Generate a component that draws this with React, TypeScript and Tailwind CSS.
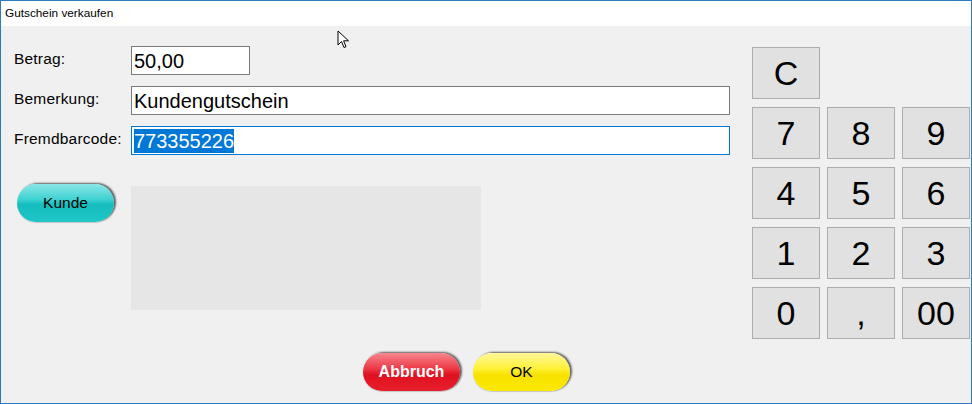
const font = { fontFamily: '"Liberation Sans", Arial, sans-serif' };

type PillProps = {
  label: string;
  tone: "cyan" | "red" | "yellow";
};

const pillClassByTone: Record<PillProps["tone"], string> = {
  cyan: "bg-[linear-gradient(to_bottom,#8be6e6_0%,#3fd2d2_40%,#15bdbe_55%,#1ec6c6_100%)] text-black text-[15.5px]",
  red: "bg-[linear-gradient(to_bottom,#f6868e_0%,#ee3b49_40%,#e0101f_58%,#e8202e_100%)] text-white text-[16px] font-bold",
  yellow: "bg-[linear-gradient(to_bottom,#fff79a_0%,#fff23a_40%,#f7e200_58%,#fde900_100%)] text-black text-[15.5px]",
};

function Pill({ label, tone }: PillProps) {
  return (
    <button
      type="button"
      className={`flex h-[38px] w-[97px] items-center justify-center rounded-full shadow-[2px_-1px_2px_rgba(0,0,0,0.6),0_1px_1px_rgba(0,0,0,0.15)] ${pillClassByTone[tone]}`}
    >
      {label}
    </button>
  );
}

function Field({
  label,
  width,
  children,
  focused,
}: {
  label: string;
  width: string;
  children: React.ReactNode;
  focused?: boolean;
}) {
  return (
    <div className="flex h-[29px] items-start">
      <div className="w-[117px] pt-[1px] text-[15.5px] tracking-[0.2px] text-black">{label}</div>
      <div
        className={`flex h-[29px] items-center border bg-white pl-[2px] text-[20px] text-black ${width} ${
          focused ? "border-[#0078d7]" : "border-[#7a7a7a]"
        }`}
      >
        {children}
      </div>
    </div>
  );
}

const keys = ["7", "8", "9", "4", "5", "6", "1", "2", "3", "0", ",", "00"];

function Key({ label }: { label: string }) {
  return (
    <button
      type="button"
      className="flex h-[52px] w-[68px] items-center justify-center border border-[#adadad] bg-[#e1e1e1] text-[34px] leading-none text-black"
    >
      {label}
    </button>
  );
}

export default function App() {
  return (
    <div
      className="flex h-[404px] w-[972px] flex-col border border-[#2b7bc0] bg-[#f0f0f0]"
      style={font}
    >
      <div className="flex h-[25px] shrink-0 items-center bg-white pl-[4px] text-[11.8px] text-black">
        Gutschein verkaufen
      </div>

      <div className="relative flex flex-1">
        <div className="flex w-[739px] flex-col pl-[13px] pt-[20px]">
          <Field label="Betrag:" width="w-[119px]">
            50,00
          </Field>
          <div className="mt-[11px]">
            <Field label="Bemerkung:" width="w-[599px]">
              Kundengutschein
            </Field>
          </div>
          <div className="mt-[11px]">
            <Field label="Fremdbarcode:" width="w-[599px]" focused>
              <span className="bg-[#0078d7] leading-[24px] text-white">773355226</span>
            </Field>
          </div>

          <div className="mt-[29px] flex">
            <div className="ml-[3px] w-[114px]">
              <Pill label="Kunde" tone="cyan" />
            </div>
            <div className="mt-[2px] h-[124px] w-[350px] bg-[#e6e6e6]" />
          </div>

          <div className="mt-[43px] flex gap-[13px] pl-[349px]">
            <Pill label="Abbruch" tone="red" />
            <Pill label="OK" tone="yellow" />
          </div>
        </div>

        <div className="ml-[12px] pt-[21px]">
          <div className="grid grid-cols-[68px_68px_68px] gap-x-[7px] gap-y-[8px]">
            <Key label="C" />
            <div />
            <div />
            {keys.map((k) => (
              <Key key={k} label={k} />
            ))}
          </div>
        </div>

        {/* mouse pointer */}
        <svg
          className="absolute left-[336px] top-[4px]"
          width="13"
          height="20"
          viewBox="0 0 13 20"
        >
          <path
            d="M1 1 L1 15 L4.5 11.5 L7 17.5 L9 16.7 L6.6 10.8 L11.5 10.8 Z"
            fill="white"
            stroke="black"
            strokeWidth="1"
            strokeLinejoin="round"
          />
        </svg>
      </div>
    </div>
  );
}
